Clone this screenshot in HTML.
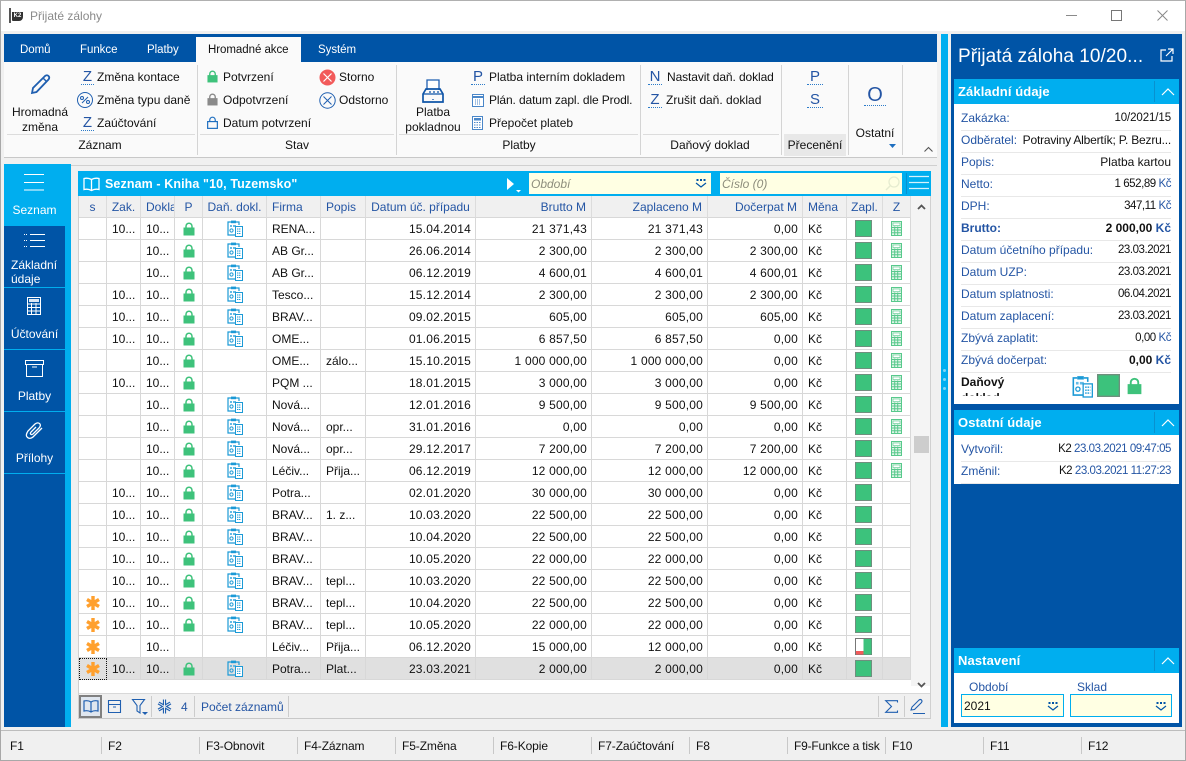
<!DOCTYPE html>
<html lang="cs"><head><meta charset="utf-8"><title>Přijaté zálohy</title>
<style>
*{box-sizing:border-box}
html,body{margin:0;padding:0;width:1186px;height:761px;overflow:hidden;background:#f0f0f0;font:12px "Liberation Sans",sans-serif;color:#111}
.a{position:absolute}
.t{position:absolute;white-space:nowrap;line-height:14px}
.u{color:#2455a4}
.w{color:#fff}
.b{font-weight:bold}
.c{text-align:center}
.r{text-align:right}
.tab{font-size:11.5px;letter-spacing:-.05px}
svg{position:absolute;overflow:visible}
table{position:absolute;left:79px;top:196px;width:832px;border-collapse:separate;border-spacing:0;table-layout:fixed;background:#fff}
th{height:22px;background:#f0f0f0;color:#2455a4;font-weight:normal;border-right:1px solid #dcdcdc;border-bottom:1px solid #d8d8d8;padding:1px 3px 0;overflow:hidden;white-space:nowrap}
td{height:22px;border-right:1px solid #d8d8d8;border-bottom:1px solid #d8d8d8;padding:1px 4px 0 5px;white-space:nowrap;overflow:hidden;position:relative}
th.r{text-align:right;padding-right:5px}
th.l{text-align:left;padding-left:5px}
td.r{text-align:right;letter-spacing:.2px}
td svg{left:50%;top:50%}
svg.k{width:12px;height:14px;margin:-7px 0 0 -6px}
svg.d{width:16px;height:17px;margin:-9px 0 0 -8px}
svg.q{width:17px;height:17px;margin:-9px 0 0 -10px}
svg.z{width:11px;height:15px;margin:-8px 0 0 -6px}
svg.s{width:14px;height:14px;margin:-7px 0 0 -7px}
.sel td{background:#e0e0e0}
.nav{position:absolute;left:4px;width:61px;height:61px;background:#0054a6;color:#fff}
.row{position:absolute;left:961px;width:210px;height:22px;border-bottom:1px solid #e8e8e8;line-height:18px}
.row i{font-style:normal;color:#2455a4}
.row b,.row span{position:absolute;right:0;top:0;font-weight:normal}
.row b{font-weight:bold}
.n{font-size:11.5px;letter-spacing:-.45px}
.sh{position:absolute;left:954px;width:225px;height:25px;background:#00aeef;color:#fff;font-weight:bold;font-size:13px;line-height:25px;padding-left:4px;letter-spacing:.1px}
.sh:after{content:"";position:absolute;left:200px;top:2px;height:21px;border-left:1px solid #0891cf}
.fk{position:absolute;top:739px;letter-spacing:-.1px}
.fs{position:absolute;top:737px;height:17px;border-left:1px solid #c8c8c8}
.gs{position:absolute;top:65px;height:90px;border-left:1px solid #d4d4d4}
.lt{position:absolute;font-size:15px;text-align:center;border-bottom:1px dotted #2c7bc9;line-height:16px;height:16px;color:#2455a4;white-space:nowrap}
</style></head><body>
<svg width="0" height="0" style="position:absolute">
<defs>
<symbol id="lock" viewBox="0 0 12 14" overflow="visible"><path d="M3 6V4.200a3 3 0 0 1 6 0V6" fill="none" stroke="#3ec27b" stroke-width="1.500"/><rect x="0.500" y="5.500" width="11" height="8" fill="#3ec27b"/></symbol>
<symbol id="clip" viewBox="0 0 16 17" overflow="visible"><path d="M4 2H1v13h7M9 2h3v3" fill="none" stroke="#1c9ad6" stroke-width="1.200"/><rect x="4" y="0.600" width="5" height="2.600" fill="#1c9ad6"/><rect x="3" y="5" width="2" height="2" fill="#63bbe6"/><rect x="6" y="5" width="3" height="2" fill="#63bbe6"/><circle cx="4.500" cy="10.500" r="1.600" fill="none" stroke="#1c9ad6"/><rect x="8.500" y="6.500" width="7" height="10" fill="#fff" stroke="#1c9ad6"/><path d="M10 9h4M10 11.300h4M10 13.500h4" stroke="#1c9ad6" stroke-dasharray="1.200 .6"/></symbol>
<symbol id="calc" viewBox="0 0 11 15" overflow="visible"><rect x=".5" y=".5" width="10" height="14" fill="#dff5e8" stroke="#58c98c"/><rect x="2" y="2" width="7" height="2.500" fill="#fff" stroke="#58c98c" stroke-width=".6"/><path d="M1 6.500h9M1 9h9M1 11.700h9M3.700 5.500v9M6.700 5.500v9" stroke="#58c98c"/></symbol>
<symbol id="star" viewBox="0 0 14 14" overflow="visible"><path d="M7 0v14M1 3.500l12 7M13 3.500l-12 7" stroke="#ffa02e" stroke-width="3.400"/></symbol>
<symbol id="sq" viewBox="0 0 17 17"><rect x=".5" y=".5" width="16" height="16" fill="#3cc27c" stroke="#6f8f7e"/></symbol>
<symbol id="drop" viewBox="0 0 12 11" overflow="visible"><path d="M1 5l5 4 5-4" fill="none" stroke="#0054a6" stroke-width="1.200"/><path d="M1.500 1h2v2h-2zM5 1h2v2H5zM8.500 1h2v2h-2z" fill="#0054a6"/></symbol>
<symbol id="up" viewBox="0 0 14 8" overflow="visible"><path d="M1 7l6-6 6 6" fill="none" stroke="#fff" stroke-width="1.200"/></symbol>
</defs></svg>

<!-- window -->
<div class="a" style="left:0;top:0;width:1186px;height:761px;border:1px solid #a8a8a8;border-top-color:#b0b0b0"></div>
<div class="a" style="left:1px;top:1px;width:1184px;height:30px;background:#fff"></div>
<div class="a" style="left:9px;top:8px;width:2px;height:15px;background:#555"></div>
<div class="a" style="left:12px;top:12px;width:11px;height:9px;background:#333;border-radius:0 0 4px 1px;color:#fff;font:bold 6px/8px 'Liberation Sans',sans-serif;text-align:center">K2</div>
<div class="t" style="left:30px;top:9px;color:#8a8a8a">Přijaté zálohy</div>
<svg style="left:1066px;top:15px" width="11" height="1"><rect width="11" height="1" fill="#8a8a8a"/></svg>
<svg style="left:1111px;top:10px" width="11" height="11"><rect x=".5" y=".5" width="10" height="10" fill="none" stroke="#777"/></svg>
<svg style="left:1157px;top:10px" width="11" height="11"><path d="M.5.500l10 10M10.500.500l-10 10" stroke="#888"/></svg>

<!-- ribbon -->
<div class="a" style="left:4px;top:34px;width:933px;height:28px;background:#0054a6"></div>
<div class="a" style="left:196px;top:37px;width:105px;height:25px;background:#fafafa"></div>
<div class="a" style="left:4px;top:62px;width:933px;height:96px;background:#fafafa;border-bottom:1px solid #c8c8c8"></div>
<div class="t w tab" style="left:20px;top:43px">Domů</div>
<div class="t w tab" style="left:80px;top:43px">Funkce</div>
<div class="t w tab" style="left:147px;top:43px">Platby</div>
<div class="t tab" style="left:208px;top:43px">Hromadné akce</div>
<div class="t w tab" style="left:318px;top:43px">Systém</div>

<div class="gs" style="left:197px"></div><div class="gs" style="left:396px"></div><div class="gs" style="left:640px"></div><div class="gs" style="left:781px"></div><div class="gs" style="left:848px"></div><div class="gs" style="left:902px"></div>
<div class="a" style="left:7px;top:134px;width:188px;height:1px;background:#dcdcdc"></div>
<div class="a" style="left:200px;top:134px;width:194px;height:1px;background:#dcdcdc"></div>
<div class="a" style="left:399px;top:134px;width:239px;height:1px;background:#dcdcdc"></div>
<div class="a" style="left:643px;top:134px;width:136px;height:1px;background:#dcdcdc"></div>
<div class="a" style="left:784px;top:134px;width:62px;height:22px;background:#e8e8e8"></div>

<svg style="left:30px;top:73px" width="22" height="22" viewBox="0 0 22 22"><path d="M2 20l1-5L15 3q2-1.500 3.500 0t0 3.500L6.500 19z" fill="none" stroke="#1f5fb0" stroke-width="1.800"/><path d="M13 5l4 4" stroke="#1f5fb0" stroke-width="1.500"/></svg>
<div class="t c" style="left:7px;top:105px;width:66px">Hromadná</div>
<div class="t c" style="left:7px;top:120px;width:66px">změna</div>

<div class="lt" style="left:81px;top:69px;width:13px">Z</div>
<div class="t" style="left:97px;top:70px">Změna kontace</div>
<svg style="left:77px;top:92px" width="16" height="16"><circle cx="8" cy="8" r="7.500" fill="none" stroke="#1f5fb0"/><path d="M5 11l6-6" stroke="#1f5fb0"/><circle cx="5" cy="6" r="1.500" fill="none" stroke="#1f5fb0"/><circle cx="11" cy="10" r="1.500" fill="none" stroke="#1f5fb0"/></svg>
<div class="t" style="left:97px;top:93px">Změna typu daně</div>
<div class="lt" style="left:81px;top:115px;width:13px">Z</div>
<div class="t" style="left:97px;top:116px">Zaúčtování</div>
<div class="t c" style="left:64px;top:138px;width:72px">Záznam</div>

<svg style="left:207px;top:70px" width="11" height="13" viewBox="0 0 12 14"><use href="#lock" width="12" height="14"/></svg>
<div class="t" style="left:223px;top:70px">Potvrzení</div>
<svg style="left:207px;top:93px" width="11" height="13" viewBox="0 0 12 14"><path d="M3 6V4.200a3 3 0 0 1 6 0V6" fill="none" stroke="#8a8a8a" stroke-width="1.500"/><rect x=".5" y="5.500" width="11" height="8" fill="#8a8a8a"/></svg>
<div class="t" style="left:223px;top:93px">Odpotvrzení</div>
<svg style="left:207px;top:116px" width="11" height="13" viewBox="0 0 12 14"><path d="M3 6V4.200a3 3 0 0 1 6 0V6" fill="none" stroke="#1f6fc0" stroke-width="1.300"/><rect x=".7" y="6" width="10.600" height="7.400" fill="none" stroke="#1f6fc0" stroke-width="1.300"/></svg>
<div class="t" style="left:223px;top:116px">Datum potvrzení</div>
<svg style="left:319px;top:69px" width="17" height="17"><circle cx="8.500" cy="8.500" r="8" fill="#f25a5a"/><path d="M4.500 4.500l8 8M12.500 4.500l-8 8" stroke="#fff" stroke-width="1.200"/></svg>
<div class="t" style="left:339px;top:70px">Storno</div>
<svg style="left:319px;top:92px" width="17" height="17"><circle cx="8.500" cy="8.500" r="7.700" fill="none" stroke="#1f5fb0"/><path d="M4.500 4.500l8 8M12.500 4.500l-8 8" stroke="#1f5fb0"/></svg>
<div class="t" style="left:339px;top:93px">Odstorno</div>
<div class="t c" style="left:270px;top:138px;width:54px">Stav</div>

<svg style="left:422px;top:78px" width="22" height="26" viewBox="0 0 22 26"><path d="M5 12V2h12v10" fill="#fff" stroke="#1f5fb0" stroke-width="1.300"/><path d="M1 16l3-5h14l3 5v8H1z" fill="none" stroke="#0f55a8" stroke-width="1.700"/><path d="M1 16h20M7 14h2M11 14h2M15 14h2M11 21v1" stroke="#0f55a8" stroke-width="1.300"/></svg>
<div class="t c" style="left:400px;top:105px;width:66px">Platba</div>
<div class="t c" style="left:400px;top:120px;width:66px">pokladnou</div>
<div class="lt" style="left:471px;top:69px;width:14px">P</div>
<div class="t" style="left:489px;top:70px">Platba interním dokladem</div>
<svg style="left:472px;top:93px" width="12" height="14"><rect x=".5" y="1.500" width="11" height="12" fill="#fff" stroke="#4a86c8"/><path d="M1 4h10" stroke="#4a86c8" stroke-width="2"/><path d="M3 7h6M3 9h6M3 11h6" stroke="#4a86c8" stroke-dasharray="1 1"/></svg>
<div class="t" style="left:489px;top:93px;letter-spacing:-.12px">Plán. datum zapl. dle Prodl.</div>
<svg style="left:472px;top:116px" width="11" height="14"><rect x=".5" y=".5" width="10" height="13" fill="#fff" stroke="#4a86c8"/><rect x="2" y="2" width="7" height="2.500" fill="#4a86c8"/><path d="M2 6.500h7M2 9h7M2 11.500h7" stroke="#4a86c8" stroke-dasharray="1.500 1"/></svg>
<div class="t" style="left:489px;top:116px">Přepočet plateb</div>
<div class="t c" style="left:494px;top:138px;width:50px">Platby</div>

<div class="lt" style="left:648px;top:69px;width:14px">N</div>
<div class="t" style="left:667px;top:70px;letter-spacing:-.1px">Nastavit daň. doklad</div>
<div class="lt" style="left:648px;top:92px;width:14px">Z</div>
<div class="t" style="left:666px;top:93px">Zrušit daň. doklad</div>
<div class="t c" style="left:670px;top:138px;width:80px">Daňový doklad</div>

<div class="lt" style="left:807px;top:69px;width:16px">P</div>
<div class="lt" style="left:807px;top:92px;width:16px">S</div>
<div class="t c" style="left:784px;top:138px;width:62px">Přecenění</div>

<div class="lt" style="left:864px;top:84px;font-size:20px;width:22px;line-height:22px;height:22px">O</div>
<div class="t c" style="left:849px;top:126px;width:52px">Ostatní</div>
<svg style="left:889px;top:144px" width="7" height="4"><path d="M0 0h7L3.500 4z" fill="#1f6fc0"/></svg>
<svg style="left:924px;top:147px" width="9" height="5"><path d="M.5 4.500l4-4 4 4" fill="none" stroke="#555" stroke-width="1.100"/></svg>

<!-- left nav -->
<div class="a" style="left:4px;top:164px;width:67px;height:563px;background:#00aeef"></div>
<div class="nav" style="top:226px"></div><div class="nav" style="top:288px"></div><div class="nav" style="top:350px"></div><div class="nav" style="top:412px"></div>
<div class="a" style="left:4px;top:474px;width:61px;height:253px;background:#0054a6"></div>
<svg style="left:24px;top:174px" width="21" height="17"><path d="M0 .5h20M0 8.500h20M0 16h20" stroke="#fff"/></svg>
<div class="t w c" style="left:4px;top:203px;width:61px">Seznam</div>
<svg style="left:24px;top:234px" width="21" height="14"><path d="M6 .5h15M6 6.500h15M6 12.500h15" stroke="#fff"/><path d="M0 .5h3M0 6.500h3M0 12.500h3" stroke="#fff" stroke-dasharray="1 1"/></svg>
<div class="t w" style="left:11px;top:258px">Základní</div>
<div class="t w" style="left:11px;top:272px">údaje</div>
<svg style="left:27px;top:297px" width="14" height="18"><rect x=".5" y=".5" width="13" height="17" fill="none" stroke="#fff"/><rect x="2" y="2" width="10" height="3" fill="#dbe8f5"/><path d="M1 7h12M1 10.500h12M1 14h12M4.500 6v11M9 6v11" stroke="#fff"/></svg>
<div class="t w c" style="left:4px;top:327px;width:61px">Účtování</div>
<svg style="left:25px;top:360px" width="19" height="17"><path d="M.5.500h18v4H.5zM1.500 4.500v12h16v-12M7 7h5" fill="none" stroke="#fff"/></svg>
<div class="t w c" style="left:4px;top:389px;width:61px">Platby</div>
<svg style="left:25px;top:421px" width="19" height="19" viewBox="0 0 19 19"><path d="M17 7L8 16q-3 2.500-5.500.5T3 10l7-7q2.500-2 4.500-.5T14 7l-6 6q-1.500 1-2.300.2T6 11l5-5" fill="none" stroke="#fff" stroke-width="1.300"/></svg>
<div class="t w c" style="left:4px;top:451px;width:61px">Přílohy</div>

<!-- list panel -->
<div class="a" style="left:71px;top:165px;width:866px;height:1px;background:#d0d0d0"></div>
<div class="a" style="left:78px;top:171px;width:853px;height:548px;background:#fff;border-left:1px solid #d0d0d0;border-right:1px solid #d0d0d0;border-bottom:1px solid #c8c8c8"></div>
<div class="a" style="left:78px;top:171px;width:853px;height:25px;background:#00aeef"></div>
<svg style="left:83px;top:177px" width="17" height="15"><path d="M8.500 2.500Q5 .5 1 1.500v11q4-1 7.500 1 3.500-2 7.500-1v-11q-4-1-7.500 1zv11" fill="none" stroke="#fff" stroke-width="1.300"/></svg>
<div class="t w b" style="left:105px;top:177px;font-size:12.500px;letter-spacing:.1px">Seznam - Kniha "10, Tuzemsko"</div>
<svg style="left:507px;top:178px" width="14" height="15"><path d="M0 0l7 6-7 6z" fill="#fff"/><path d="M9 12h5l-2.500 2.500z" fill="#fff"/></svg>
<div class="a" style="left:529px;top:173px;width:182px;height:21px;background:#ffffe3"></div>
<div class="t" style="left:531px;top:177px;color:#8d8d7c;font-style:italic">Období</div>
<svg style="left:695px;top:178px" width="12" height="11"><use href="#drop" width="12" height="11"/></svg>
<div class="a" style="left:720px;top:173px;width:182px;height:21px;background:#ffffe3"></div>
<div class="t" style="left:722px;top:177px;color:#8d8d7c;font-style:italic">Číslo (0)</div>
<svg style="left:885px;top:176px" width="15" height="15"><circle cx="9" cy="6" r="5" fill="none" stroke="#e6ecd0" stroke-width="1.300"/><path d="M5 10l-4 4" stroke="#e6ecd0" stroke-width="1.500"/></svg>
<div class="a" style="left:906px;top:173px;width:1px;height:21px;background:#0891cf"></div>
<svg style="left:909px;top:175px" width="20" height="16"><path d="M0 1.500h20M0 7.500h20M0 13.500h20" stroke="#d8f2fc" stroke-width="1.200"/></svg>

<table>
<colgroup><col style="width:28px"><col style="width:34px"><col style="width:34px"><col style="width:28px"><col style="width:64px"><col style="width:54px"><col style="width:45px"><col style="width:110px"><col style="width:116px"><col style="width:116px"><col style="width:95px"><col style="width:44px"><col style="width:36px"><col style="width:28px"></colgroup>
<tr><th>s</th><th>Zak.</th><th class="l">Dokla</th><th>P</th><th>Daň. dokl.</th><th class="l">Firma</th><th class="l">Popis</th><th>Datum úč. případu</th><th class="r">Brutto M</th><th class="r">Zaplaceno M</th><th class="r">Dočerpat M</th><th class="l">Měna</th><th>Zapl.</th><th>Z</th></tr>
<tr><td></td><td>10...</td><td>10...</td><td><svg class="k"><use href="#lock"/></svg></td><td><svg class="d"><use href="#clip"/></svg></td><td>RENA...</td><td></td><td class="r">15.04.2014</td><td class="r">21 371,43</td><td class="r">21 371,43</td><td class="r">0,00</td><td>Kč</td><td><svg class="q"><use href="#sq"/></svg></td><td><svg class="z"><use href="#calc"/></svg></td></tr>
<tr><td></td><td></td><td>10...</td><td><svg class="k"><use href="#lock"/></svg></td><td><svg class="d"><use href="#clip"/></svg></td><td>AB Gr...</td><td></td><td class="r">26.06.2014</td><td class="r">2 300,00</td><td class="r">2 300,00</td><td class="r">2 300,00</td><td>Kč</td><td><svg class="q"><use href="#sq"/></svg></td><td><svg class="z"><use href="#calc"/></svg></td></tr>
<tr><td></td><td></td><td>10...</td><td><svg class="k"><use href="#lock"/></svg></td><td><svg class="d"><use href="#clip"/></svg></td><td>AB Gr...</td><td></td><td class="r">06.12.2019</td><td class="r">4 600,01</td><td class="r">4 600,01</td><td class="r">4 600,01</td><td>Kč</td><td><svg class="q"><use href="#sq"/></svg></td><td><svg class="z"><use href="#calc"/></svg></td></tr>
<tr><td></td><td>10...</td><td>10...</td><td><svg class="k"><use href="#lock"/></svg></td><td><svg class="d"><use href="#clip"/></svg></td><td>Tesco...</td><td></td><td class="r">15.12.2014</td><td class="r">2 300,00</td><td class="r">2 300,00</td><td class="r">2 300,00</td><td>Kč</td><td><svg class="q"><use href="#sq"/></svg></td><td><svg class="z"><use href="#calc"/></svg></td></tr>
<tr><td></td><td>10...</td><td>10...</td><td><svg class="k"><use href="#lock"/></svg></td><td><svg class="d"><use href="#clip"/></svg></td><td>BRAV...</td><td></td><td class="r">09.02.2015</td><td class="r">605,00</td><td class="r">605,00</td><td class="r">605,00</td><td>Kč</td><td><svg class="q"><use href="#sq"/></svg></td><td><svg class="z"><use href="#calc"/></svg></td></tr>
<tr><td></td><td>10...</td><td>10...</td><td><svg class="k"><use href="#lock"/></svg></td><td><svg class="d"><use href="#clip"/></svg></td><td>OME...</td><td></td><td class="r">01.06.2015</td><td class="r">6 857,50</td><td class="r">6 857,50</td><td class="r">0,00</td><td>Kč</td><td><svg class="q"><use href="#sq"/></svg></td><td><svg class="z"><use href="#calc"/></svg></td></tr>
<tr><td></td><td></td><td>10...</td><td><svg class="k"><use href="#lock"/></svg></td><td></td><td>OME...</td><td>zálo...</td><td class="r">15.10.2015</td><td class="r">1 000 000,00</td><td class="r">1 000 000,00</td><td class="r">0,00</td><td>Kč</td><td><svg class="q"><use href="#sq"/></svg></td><td><svg class="z"><use href="#calc"/></svg></td></tr>
<tr><td></td><td>10...</td><td>10...</td><td><svg class="k"><use href="#lock"/></svg></td><td></td><td>PQM ...</td><td></td><td class="r">18.01.2015</td><td class="r">3 000,00</td><td class="r">3 000,00</td><td class="r">0,00</td><td>Kč</td><td><svg class="q"><use href="#sq"/></svg></td><td><svg class="z"><use href="#calc"/></svg></td></tr>
<tr><td></td><td></td><td>10...</td><td><svg class="k"><use href="#lock"/></svg></td><td><svg class="d"><use href="#clip"/></svg></td><td>Nová...</td><td></td><td class="r">12.01.2016</td><td class="r">9 500,00</td><td class="r">9 500,00</td><td class="r">9 500,00</td><td>Kč</td><td><svg class="q"><use href="#sq"/></svg></td><td><svg class="z"><use href="#calc"/></svg></td></tr>
<tr><td></td><td></td><td>10...</td><td><svg class="k"><use href="#lock"/></svg></td><td><svg class="d"><use href="#clip"/></svg></td><td>Nová...</td><td>opr...</td><td class="r">31.01.2016</td><td class="r">0,00</td><td class="r">0,00</td><td class="r">0,00</td><td>Kč</td><td><svg class="q"><use href="#sq"/></svg></td><td><svg class="z"><use href="#calc"/></svg></td></tr>
<tr><td></td><td></td><td>10...</td><td><svg class="k"><use href="#lock"/></svg></td><td><svg class="d"><use href="#clip"/></svg></td><td>Nová...</td><td>opr...</td><td class="r">29.12.2017</td><td class="r">7 200,00</td><td class="r">7 200,00</td><td class="r">7 200,00</td><td>Kč</td><td><svg class="q"><use href="#sq"/></svg></td><td><svg class="z"><use href="#calc"/></svg></td></tr>
<tr><td></td><td></td><td>10...</td><td><svg class="k"><use href="#lock"/></svg></td><td><svg class="d"><use href="#clip"/></svg></td><td>Léčiv...</td><td>Přija...</td><td class="r">06.12.2019</td><td class="r">12 000,00</td><td class="r">12 000,00</td><td class="r">12 000,00</td><td>Kč</td><td><svg class="q"><use href="#sq"/></svg></td><td><svg class="z"><use href="#calc"/></svg></td></tr>
<tr><td></td><td>10...</td><td>10...</td><td><svg class="k"><use href="#lock"/></svg></td><td><svg class="d"><use href="#clip"/></svg></td><td>Potra...</td><td></td><td class="r">02.01.2020</td><td class="r">30 000,00</td><td class="r">30 000,00</td><td class="r">0,00</td><td>Kč</td><td><svg class="q"><use href="#sq"/></svg></td><td></td></tr>
<tr><td></td><td>10...</td><td>10...</td><td><svg class="k"><use href="#lock"/></svg></td><td><svg class="d"><use href="#clip"/></svg></td><td>BRAV...</td><td>1. z...</td><td class="r">10.03.2020</td><td class="r">22 500,00</td><td class="r">22 500,00</td><td class="r">0,00</td><td>Kč</td><td><svg class="q"><use href="#sq"/></svg></td><td></td></tr>
<tr><td></td><td>10...</td><td>10...</td><td><svg class="k"><use href="#lock"/></svg></td><td><svg class="d"><use href="#clip"/></svg></td><td>BRAV...</td><td></td><td class="r">10.04.2020</td><td class="r">22 500,00</td><td class="r">22 500,00</td><td class="r">0,00</td><td>Kč</td><td><svg class="q"><use href="#sq"/></svg></td><td></td></tr>
<tr><td></td><td>10...</td><td>10...</td><td><svg class="k"><use href="#lock"/></svg></td><td><svg class="d"><use href="#clip"/></svg></td><td>BRAV...</td><td></td><td class="r">10.05.2020</td><td class="r">22 000,00</td><td class="r">22 000,00</td><td class="r">0,00</td><td>Kč</td><td><svg class="q"><use href="#sq"/></svg></td><td></td></tr>
<tr><td></td><td>10...</td><td>10...</td><td><svg class="k"><use href="#lock"/></svg></td><td><svg class="d"><use href="#clip"/></svg></td><td>BRAV...</td><td>tepl...</td><td class="r">10.03.2020</td><td class="r">22 500,00</td><td class="r">22 500,00</td><td class="r">0,00</td><td>Kč</td><td><svg class="q"><use href="#sq"/></svg></td><td></td></tr>
<tr><td><svg class="s"><use href="#star"/></svg></td><td>10...</td><td>10...</td><td><svg class="k"><use href="#lock"/></svg></td><td><svg class="d"><use href="#clip"/></svg></td><td>BRAV...</td><td>tepl...</td><td class="r">10.04.2020</td><td class="r">22 500,00</td><td class="r">22 500,00</td><td class="r">0,00</td><td>Kč</td><td><svg class="q"><use href="#sq"/></svg></td><td></td></tr>
<tr><td><svg class="s"><use href="#star"/></svg></td><td>10...</td><td>10...</td><td><svg class="k"><use href="#lock"/></svg></td><td><svg class="d"><use href="#clip"/></svg></td><td>BRAV...</td><td>tepl...</td><td class="r">10.05.2020</td><td class="r">22 000,00</td><td class="r">22 000,00</td><td class="r">0,00</td><td>Kč</td><td><svg class="q"><use href="#sq"/></svg></td><td></td></tr>
<tr><td><svg class="s"><use href="#star"/></svg></td><td></td><td>10...</td><td></td><td></td><td>Léčiv...</td><td>Přija...</td><td class="r">06.12.2020</td><td class="r">15 000,00</td><td class="r">12 000,00</td><td class="r">0,00</td><td>Kč</td><td><svg class="q"><rect x=".5" y=".5" width="16" height="16" fill="#fff" stroke="#777"/><rect x="8.500" y="1" width="8" height="15.500" fill="#3cc27c"/><rect x="1" y="13" width="7.500" height="3.500" fill="#f25a5a"/></svg></td><td></td></tr>
<tr class="sel"><td style="outline:1px dotted #111;outline-offset:-1px"><svg class="s"><use href="#star"/></svg></td><td>10...</td><td>10...</td><td><svg class="k"><use href="#lock"/></svg></td><td><svg class="d"><use href="#clip"/></svg></td><td>Potra...</td><td>Plat...</td><td class="r">23.03.2021</td><td class="r">2 000,00</td><td class="r">2 000,00</td><td class="r">0,00</td><td>Kč</td><td><svg class="q"><use href="#sq"/></svg></td><td></td></tr>
</table>

<!-- scrollbar -->
<div class="a" style="left:911px;top:196px;width:19px;height:490px;background:#f4f4f4"></div>
<svg style="left:917px;top:204px" width="9" height="6"><path d="M1 5l3.500-3.500L8 5" fill="none" stroke="#555" stroke-width="1.800"/></svg>
<svg style="left:917px;top:682px" width="9" height="6"><path d="M1 1l3.500 3.500L8 1" fill="none" stroke="#555" stroke-width="1.800"/></svg>
<div class="a" style="left:914px;top:436px;width:15px;height:17px;background:#cdcdcd"></div>

<!-- list toolbar -->
<div class="a" style="left:79px;top:693px;width:851px;height:25px;background:#f0f0f0;border-top:1px solid #d8d8d8"></div>
<div class="a" style="left:79px;top:695px;width:23px;height:23px;background:#dfe6ef;border:2px solid #808080"></div>
<svg style="left:83px;top:700px" width="16" height="13"><path d="M8 2Q5 0 1 1v10q4-1 7 1 3-2 7-1V1q-4-1-7 1zv10" fill="none" stroke="#1f5fb0" stroke-width="1.200"/></svg>
<svg style="left:108px;top:700px" width="13" height="13"><path d="M.5.500h12v12H.5zM.5 4.500h12M5 7h3" fill="none" stroke="#1f5fb0" stroke-width="1.100"/></svg>
<svg style="left:132px;top:699px" width="17" height="17"><path d="M.5.500h12L8 6.500V14L5 12V6.500z" fill="none" stroke="#1f5fb0" stroke-width="1.100"/><path d="M10 13h6l-3 3z" fill="#1f5fb0"/></svg>
<div class="a" style="left:151px;top:696px;width:1px;height:21px;background:#ccc"></div>
<svg style="left:157px;top:699px" width="15" height="15" viewBox="0 0 15 15"><path d="M7.500.5v14M1.500 4l12 7M13.500 4l-12 7" stroke="#1f5fb0" stroke-width="3.200"/><path d="M7.500.5v14M1.500 4l12 7M13.500 4l-12 7" stroke="#f0f0f0"/></svg>
<div class="t u" style="left:181px;top:700px">4</div>
<div class="a" style="left:194px;top:696px;width:1px;height:21px;background:#ccc"></div>
<div class="t u" style="left:201px;top:700px">Počet záznamů</div>
<div class="a" style="left:288px;top:696px;width:1px;height:21px;background:#ccc"></div>
<div class="a" style="left:878px;top:696px;width:1px;height:21px;background:#ccc"></div>
<div class="a" style="left:904px;top:696px;width:1px;height:21px;background:#ccc"></div>
<svg style="left:885px;top:700px" width="13" height="13"><path d="M12.500 2.500V.7H.7L6.500 6.500.7 12.300h11.800v-1.800" fill="none" stroke="#1f5fb0" stroke-width="1.100"/></svg>
<svg style="left:910px;top:699px" width="16" height="15" viewBox="0 0 16 15"><path d="M1 11l1-3 7-7q1.500-1 2.500 0t0 2.500l-7 7zM3 14.500h12" fill="none" stroke="#1f5fb0" stroke-width="1.100"/></svg>

<!-- status bar -->
<div class="a" style="left:1px;top:730px;width:1184px;height:1px;background:#bdbdbd"></div>
<div class="fk" style="left:10px">F1</div><div class="fs" style="left:101px"></div>
<div class="fk" style="left:108px">F2</div><div class="fs" style="left:199px"></div>
<div class="fk" style="left:206px">F3-Obnovit</div><div class="fs" style="left:297px"></div>
<div class="fk" style="left:304px">F4-Záznam</div><div class="fs" style="left:395px"></div>
<div class="fk" style="left:402px">F5-Změna</div><div class="fs" style="left:493px"></div>
<div class="fk" style="left:500px">F6-Kopie</div><div class="fs" style="left:591px"></div>
<div class="fk" style="left:598px">F7-Zaúčtování</div><div class="fs" style="left:689px"></div>
<div class="fk" style="left:696px">F8</div><div class="fs" style="left:787px"></div>
<div class="fk" style="left:794px;letter-spacing:-.2px">F9-Funkce a tisk</div><div class="fs" style="left:885px"></div>
<div class="fk" style="left:892px">F10</div><div class="fs" style="left:983px"></div>
<div class="fk" style="left:990px">F11</div><div class="fs" style="left:1081px"></div>
<div class="fk" style="left:1088px">F12</div>

<!-- splitter -->
<div class="a" style="left:941px;top:34px;width:7px;height:693px;background:#00aeef"></div>
<div class="a" style="left:943px;top:369px;width:3px;height:3px;border-radius:2px;background:#7fd6f7"></div>
<div class="a" style="left:943px;top:378px;width:3px;height:3px;border-radius:2px;background:#7fd6f7"></div>
<div class="a" style="left:943px;top:387px;width:3px;height:3px;border-radius:2px;background:#7fd6f7"></div>

<!-- right panel -->
<div class="a" style="left:951px;top:34px;width:231px;height:693px;background:#0054a6"></div>
<div class="t w" style="left:958px;top:45px;font-size:19px;line-height:24px;letter-spacing:.06px">Přijatá záloha 10/20...</div>
<svg style="left:1160px;top:48px" width="14" height="14"><path d="M6 2H1v11h11V8M8 1h5v5M13 1L6 8" fill="none" stroke="#fff" stroke-width="1.200"/></svg>

<div class="sh" style="top:79px">Základní údaje</div>
<svg style="left:1161px;top:88px" width="14" height="8"><use href="#up" width="14" height="8"/></svg>
<div class="a" style="left:954px;top:104px;width:225px;height:300px;background:#fff"></div>
<div class="a" style="left:954px;top:104px;width:225px;height:292px;overflow:hidden">
<div class="t b" style="left:7px;top:270px;line-height:16px">Daňový<br>doklad</div>
</div>
<div class="row" style="top:109px"><i>Zakázka:</i><span style="font-size:11.500px;letter-spacing:-.1px">10/2021/15</span></div>
<div class="row" style="top:131px"><i>Odběratel:</i><span style="letter-spacing:-.2px">Potraviny Albertík; P. Bezru...</span></div>
<div class="row" style="top:153px"><i>Popis:</i><span>Platba kartou</span></div>
<div class="row" style="top:175px"><i>Netto:</i><span class="n">1 652,89 <i>Kč</i></span></div>
<div class="row" style="top:197px"><i>DPH:</i><span class="n">347,11 <i>Kč</i></span></div>
<div class="row" style="top:219px"><i class="b">Brutto:</i><b>2 000,00 <i>Kč</i></b></div>
<div class="row" style="top:241px"><i>Datum účetního případu:</i><span class="n">23.03.2021</span></div>
<div class="row" style="top:263px"><i>Datum UZP:</i><span class="n">23.03.2021</span></div>
<div class="row" style="top:285px"><i>Datum splatnosti:</i><span class="n">06.04.2021</span></div>
<div class="row" style="top:307px"><i>Datum zaplacení:</i><span class="n">23.03.2021</span></div>
<div class="row" style="top:329px"><i>Zbývá zaplatit:</i><span class="n">0,00 <i>Kč</i></span></div>
<div class="row" style="top:351px"><i>Zbývá dočerpat:</i><b>0,00 <i>Kč</i></b></div>
<svg style="left:1072px;top:375px" width="21" height="23" viewBox="0 0 16 17"><use href="#clip" width="16" height="17"/></svg>
<svg style="left:1097px;top:374px" width="23" height="23" viewBox="0 0 17 17"><use href="#sq" width="17" height="17"/></svg>
<svg style="left:1127px;top:377px" width="15" height="18" viewBox="0 0 12 14"><use href="#lock" width="12" height="14"/></svg>

<div class="sh" style="top:410px">Ostatní údaje</div>
<svg style="left:1161px;top:419px" width="14" height="8"><use href="#up" width="14" height="8"/></svg>
<div class="a" style="left:954px;top:435px;width:225px;height:49px;background:#fff"></div>
<div class="row" style="top:440px"><i>Vytvořil:</i><span class="n">K2 <i>23.03.2021 09:47:05</i></span></div>
<div class="row" style="top:462px"><i>Změnil:</i><span class="n">K2 <i>23.03.2021 11:27:23</i></span></div>

<div class="sh" style="top:648px">Nastavení</div>
<svg style="left:1161px;top:657px" width="14" height="8"><use href="#up" width="14" height="8"/></svg>
<div class="a" style="left:954px;top:673px;width:225px;height:50px;background:#fff"></div>
<div class="t u" style="left:969px;top:680px">Období</div>
<div class="t u" style="left:1077px;top:680px">Sklad</div>
<div class="a" style="left:961px;top:694px;width:103px;height:23px;background:#ffffe3;border:1px solid #00aeef"></div>
<div class="t" style="left:964px;top:699px">2021</div>
<svg style="left:1047px;top:701px" width="12" height="11"><use href="#drop" width="12" height="11"/></svg>
<div class="a" style="left:1070px;top:694px;width:102px;height:23px;background:#ffffe3;border:1px solid #00aeef"></div>
<svg style="left:1155px;top:701px" width="12" height="11"><use href="#drop" width="12" height="11"/></svg>
</body></html>
